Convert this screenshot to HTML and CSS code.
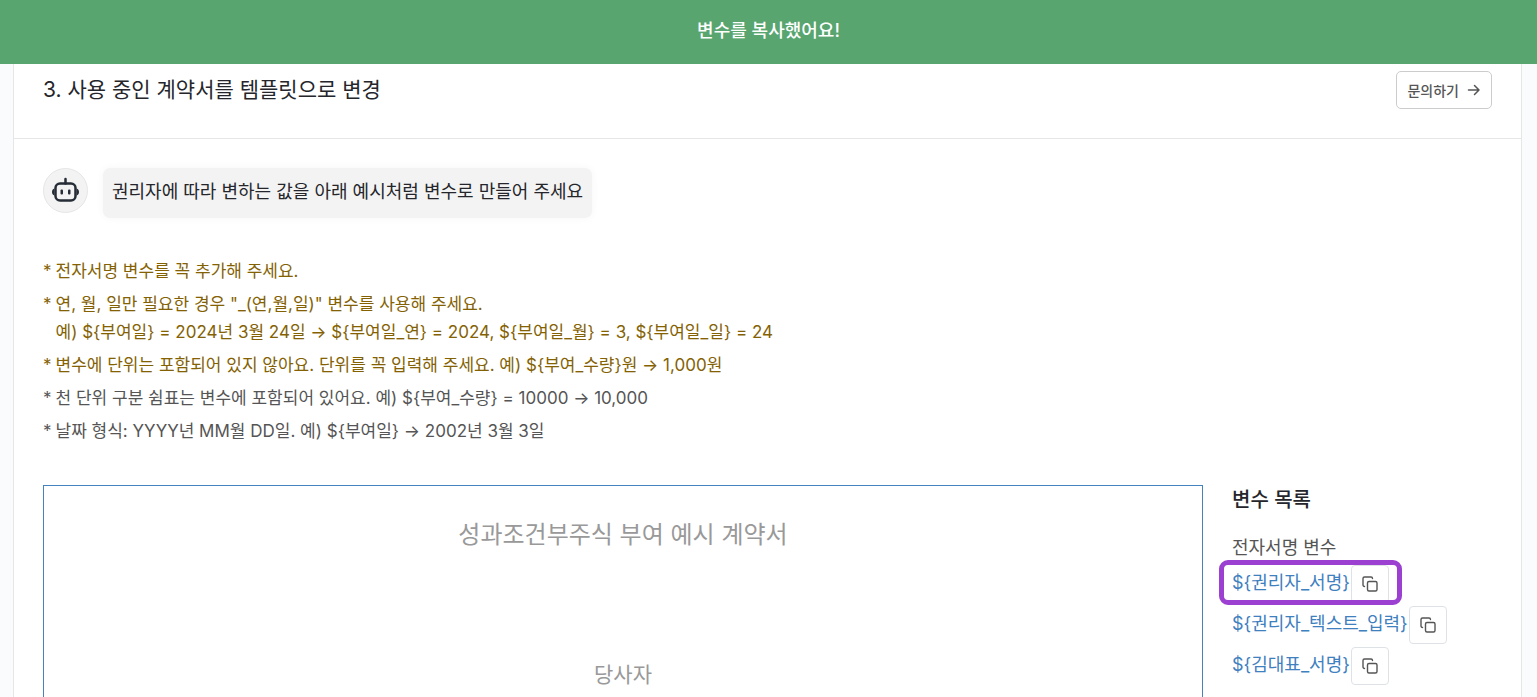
FILE: index.html
```html
<!DOCTYPE html>
<html lang="ko">
    <head>
        <meta charset="UTF-8">
        <meta name="viewport" content="width=device-width, initial-scale=1">
        <title>템플릿으로 변경</title>
        <link rel="stylesheet" href="styles.css">
    </head>
    <body>
        <div class="toast" role="status">변수를 복사했어요!</div>

        <main class="panel">
            <header class="panel-header">
                <h1 class="panel-title">3. 사용 중인 계약서를 템플릿으로 변경</h1>
                <button type="button" class="contact-button">
                    문의하기
                    <svg class="arrow-icon" viewBox="0 0 14 14" aria-hidden="true">
                        <path d="M1.5 7h10.5M7.5 2.500l4.500 4.500-4.500 4.500"/>
                    </svg>
                </button>
            </header>

            <div class="panel-body">
                <div class="chat">
                    <div class="avatar">
                        <svg class="robot-icon" viewBox="0 0 28 28" aria-hidden="true">
                            <rect class="line" x="3.5" y="6.5" width="20" height="17" rx="4.5"/>
                            <path class="line" d="M13.5 6.5V2"/>
                            <path class="fill" d="M2.5 11.5C.8 12 0 13 0 15s.8 3 2.500 3.500zM24.500 11.500C26.200 12 27 13 27 15s-.8 3-2.500 3.500z"/>
                            <rect class="fill" x="8.5" y="12.5" width="2.5" height="5" rx="1"/>
                            <rect class="fill" x="16" y="12.5" width="2.5" height="5" rx="1"/>
                        </svg>
                    </div>
                    <p class="bubble">권리자에 따라 변하는 값을 아래 예시처럼 변수로 만들어 주세요</p>
                </div>

                <ul class="notes">
                    <li class="important">전자서명 변수를 꼭 추가해 주세요.</li>
                    <li class="important">연, 월, 일만 필요한 경우 "_(연,월,일)" 변수를 사용해 주세요.<br>예) ${부여일} = 2024년 3월 24일 → ${부여일_연} = 2024, ${부여일_월} = 3, ${부여일_일} = 24</li>
                    <li class="important">변수에 단위는 포함되어 있지 않아요. 단위를 꼭 입력해 주세요. 예) ${부여_수량}원 → 1,000원</li>
                    <li>천 단위 구분 쉼표는 변수에 포함되어 있어요. 예) ${부여_수량} = 10000 → 10,000</li>
                    <li>날짜 형식: YYYY년 MM월 DD일. 예) ${부여일} → 2002년 3월 3일</li>
                </ul>

                <div class="workspace">
                    <article class="document">
                        <h2 class="document-title">성과조건부주식 부여 예시 계약서</h2>
                        <h3 class="document-section">당사자</h3>
                    </article>

                    <aside class="variables">
                        <h2 class="variables-title">변수 목록</h2>
                        <h3 class="variables-group">전자서명 변수</h3>
                        <ul class="variable-list">
                            <li class="variable selected">
                                <span class="variable-name">${권리자_서명}</span>
                                <button type="button" class="copy-button" aria-label="복사">
                                    <svg class="copy-icon" viewBox="0 0 16 16" aria-hidden="true">
                                        <rect x="5.5" y="5.5" width="9.5" height="9.5" rx="1.5"/>
                                        <path d="M2.5 10.5A1.5 1.5 0 0 1 1 9V2.5A1.5 1.5 0 0 1 2.5 1H9a1.5 1.5 0 0 1 1.5 1.5"/>
                                    </svg>
                                </button>
                            </li>
                            <li class="variable">
                                <span class="variable-name">${권리자_텍스트_입력}</span>
                                <button type="button" class="copy-button" aria-label="복사">
                                    <svg class="copy-icon" viewBox="0 0 16 16" aria-hidden="true">
                                        <rect x="5.5" y="5.5" width="9.5" height="9.5" rx="1.5"/>
                                        <path d="M2.5 10.5A1.5 1.5 0 0 1 1 9V2.5A1.5 1.5 0 0 1 2.5 1H9a1.5 1.5 0 0 1 1.5 1.5"/>
                                    </svg>
                                </button>
                            </li>
                            <li class="variable">
                                <span class="variable-name">${김대표_서명}</span>
                                <button type="button" class="copy-button" aria-label="복사">
                                    <svg class="copy-icon" viewBox="0 0 16 16" aria-hidden="true">
                                        <rect x="5.5" y="5.5" width="9.5" height="9.5" rx="1.5"/>
                                        <path d="M2.5 10.5A1.5 1.5 0 0 1 1 9V2.5A1.5 1.5 0 0 1 2.5 1H9a1.5 1.5 0 0 1 1.5 1.5"/>
                                    </svg>
                                </button>
                            </li>
                        </ul>
                    </aside>
                </div>
            </div>
        </main>
    </body>
</html>
```

FILE: styles.css
```css
* {
    box-sizing: border-box;
}

body {
    margin: 0;
    padding: 42px 15px 0 13px;
    background-color: #fafbfd;
    color: #25262b;
    font-family: Inter, "Noto Sans CJK KR", sans-serif;
    font-size: 17px;
}

h1, h2, h3, p, ul {
    margin: 0;
    padding: 0;
    font-weight: 400;
}

ul {
    list-style: none;
}

button {
    font-family: inherit;
    background-color: #ffffff;
    cursor: pointer;
}

svg {
    fill: none;
    stroke: currentColor;
    stroke-linecap: round;
    stroke-linejoin: round;
}

/* toast */
.toast {
    position: fixed;
    top: 0;
    left: 0;
    right: 0;
    z-index: 10;
    padding: 17px 0 19px;
    background-color: #58a570;
    color: #ffffff;
    font-size: 18px;
    font-weight: 500;
    line-height: 28px;
    text-align: center;
}

/* panel */
.panel {
    background-color: #ffffff;
    border: 1px solid #e4e6e8;
    border-top: none;
}

.panel-header {
    display: flex;
    align-items: center;
    justify-content: space-between;
    padding: 29px;
    border-bottom: 1px solid #e4e6e8;
}

.panel-title {
    font-size: 21px;
    line-height: 32px;
}

.contact-button {
    display: flex;
    align-items: center;
    gap: 8px;
    height: 38px;
    padding: 0 10px;
    border: 1px solid #cccccc;
    border-radius: 5px;
    color: #555555;
    font-size: 14px;
    font-weight: 500;
}

.arrow-icon {
    width: 14px;
    height: 14px;
    stroke-width: 1.5;
}

.panel-body {
    padding: 29px 29px 40px;
}

.chat {
    display: flex;
    align-items: flex-start;
    gap: 15px;
}

.avatar {
    display: flex;
    align-items: center;
    justify-content: center;
    width: 45px;
    height: 45px;
    border: 1px solid #e6e6e6;
    border-radius: 50%;
    background-color: #f3f3f3;
    color: #262d36;
}

.robot-icon {
    width: 28px;
    height: 28px;
}

.robot-icon .line {
    stroke-width: 2.5;
}

.robot-icon .fill {
    fill: currentColor;
    stroke: none;
}

.bubble {
    padding: 8px 9px 10px;
    border-radius: 7px;
    background-color: #f3f3f3;
    box-shadow: 0 0 8px rgba(0, 0, 0, 0.04);
    font-size: 18px;
    line-height: 32px;
}

/* notes */
.notes {
    display: flex;
    flex-direction: column;
    gap: 5px;
    margin: 39px 0 40px;
    color: #555555;
    line-height: 28px;
}

.notes li {
    display: flex;
    gap: 4px;
}

.notes li::before {
    content: "*";
}

.notes .important {
    color: #846204;
}

/* document + variables */
.workspace {
    display: grid;
    grid-template-columns: 1fr 260px;
    gap: 29px;
}

.document {
    padding: 31px 30px;
    border: 1px solid #4483bd;
    color: #999999;
    text-align: center;
}

.document-title {
    margin-bottom: 106px;
    font-size: 24px;
    line-height: 36px;
}

.document-section {
    font-size: 21px;
    line-height: 32px;
}

.variables {
    padding-top: 1px;
}

.variables-title {
    margin-bottom: 21px;
    font-size: 20px;
    font-weight: 500;
    line-height: 28px;
}

.variables-group {
    margin-bottom: 4px;
    color: #555555;
    font-size: 18px;
    line-height: 26px;
}

.variable-list {
    display: flex;
    flex-direction: column;
    align-items: flex-start;
    gap: 3px;
}

.variable {
    display: flex;
    gap: 1px;
    position: relative;
    color: #3f80bf;
    font-size: 18px;
    line-height: 36px;
}

.variable.selected::after {
    content: "";
    position: absolute;
    inset: -5px -13px -2px;
    border: 5px solid #9b40d0;
    border-radius: 9px;
    pointer-events: none;
}

.copy-button {
    display: flex;
    align-items: center;
    justify-content: center;
    width: 38px;
    height: 38px;
    padding: 0;
    border: 1px solid #dee2e6;
    border-radius: 4px;
    color: #555555;
}

.copy-icon {
    width: 16px;
    height: 16px;
    stroke-width: 1.4;
}
```
